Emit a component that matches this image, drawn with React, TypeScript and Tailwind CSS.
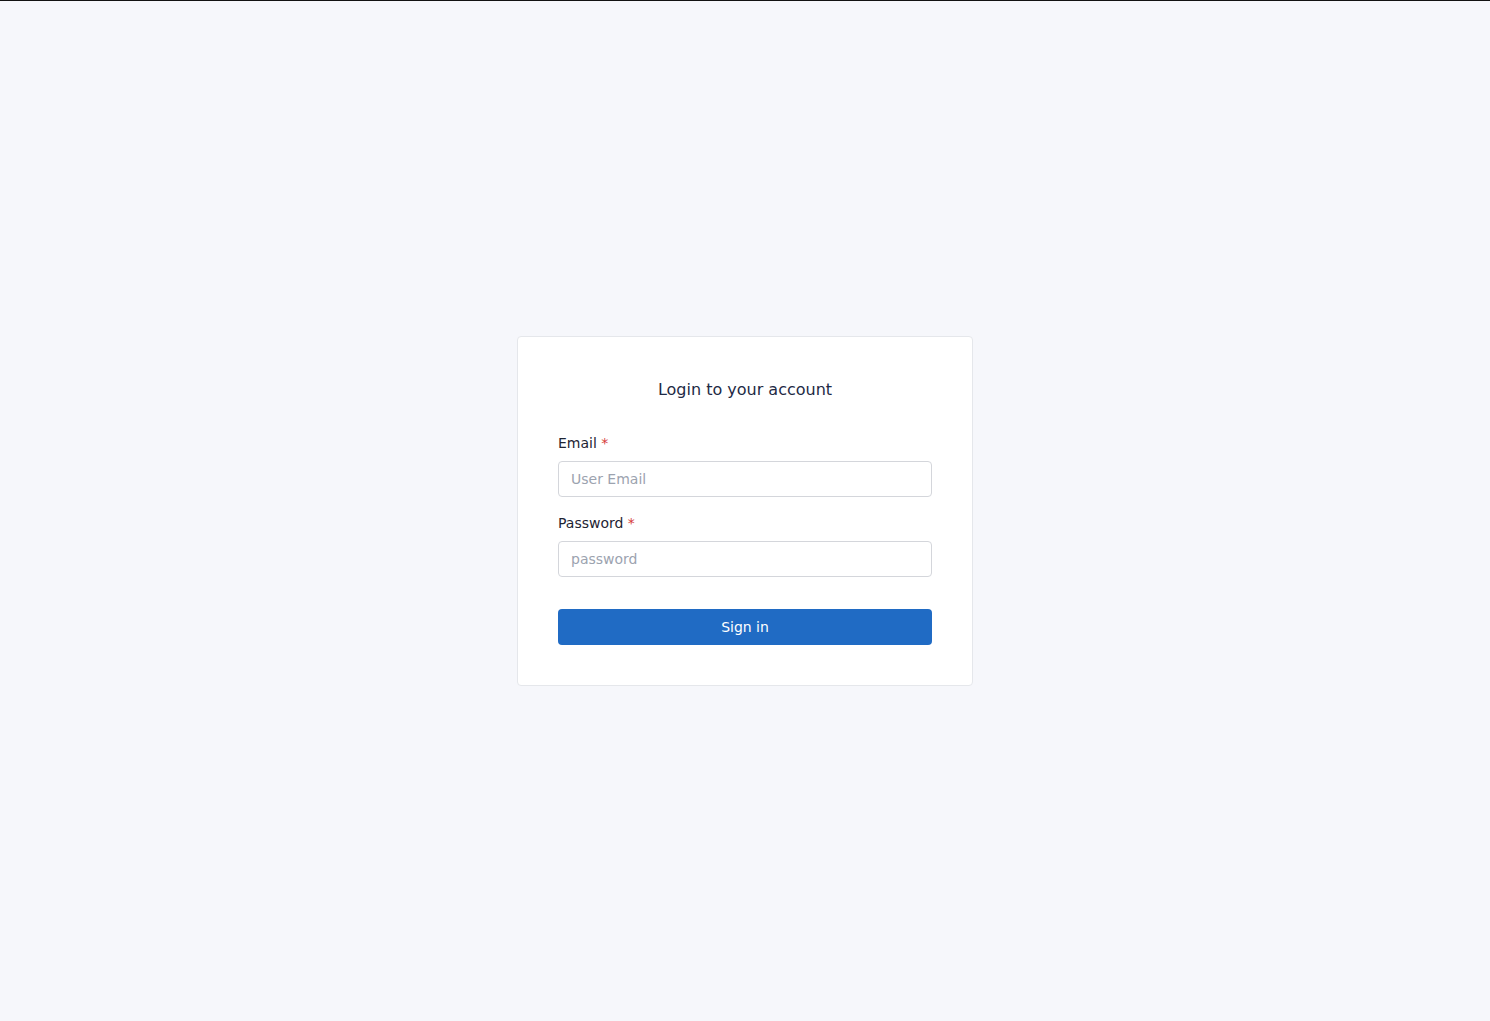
export default function App() {
  return (
    <div className="flex min-h-screen flex-col bg-[#f6f7fb] font-['DejaVu_Sans',sans-serif]">
      <div className="h-px bg-[#121212]" />
      <div className="flex flex-1 items-center justify-center">
        <div className="w-[456px] rounded border border-[#e5e7eb] bg-white p-10">
          <h1 className="pt-px text-center text-base leading-6 text-[#1e2a45]">Login to your account</h1>

          <form className="mt-[31px]" onSubmit={(e) => e.preventDefault()}>
            <label className="block text-sm leading-5 text-[#1e2433]">
              Email <span className="text-[#d63939]">*</span>
            </label>
            <input
              type="email"
              placeholder="User Email"
              className="mt-2 h-9 w-full rounded border border-[#d4d6db] px-3 text-sm text-[#1e2433] placeholder:text-[#9ca3af] outline-none"
            />

            <label className="mt-4 block text-sm leading-5 text-[#1e2433]">
              Password <span className="text-[#d63939]">*</span>
            </label>
            <input
              type="password"
              placeholder="password"
              className="mt-2 h-9 w-full rounded border border-[#d4d6db] px-3 text-sm text-[#1e2433] placeholder:text-[#9ca3af] outline-none"
            />

            <button
              type="submit"
              className="mt-8 h-9 w-full rounded bg-[#206bc4] text-sm text-white"
            >
              Sign in
            </button>
          </form>
        </div>
      </div>
    </div>
  );
}
